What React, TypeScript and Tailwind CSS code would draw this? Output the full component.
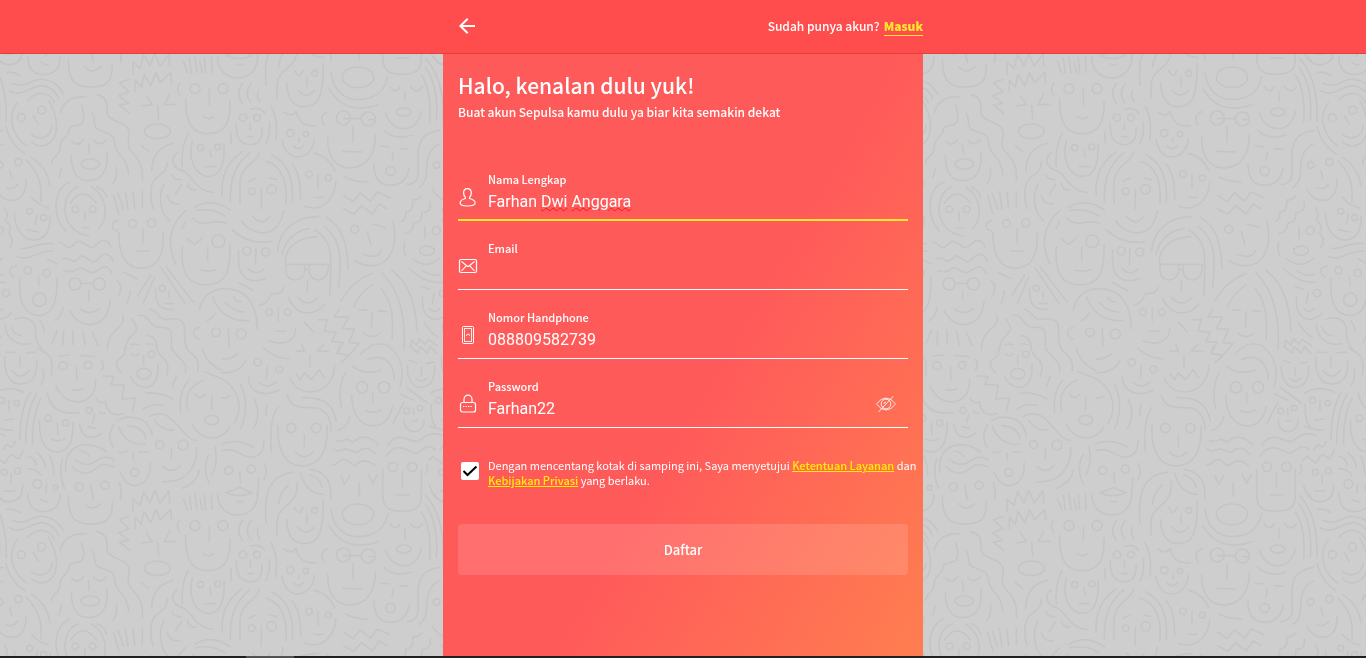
import { useState } from "react";
import type { ReactNode } from "react";

type Circle = [number, number, number];
type Ellipse = [number, number, number, number];

const UPPER =
  "M-63 50 Q-63 104 -13 104 Q33 100 33 52 M-25 66 Q-17 74 -4 74 M58 58 C58 120 75 141 127 141 C180 141 190 120 190 75 M108 80 Q128 106 156 80 M129 42 L132 66 M216 42 V66 " +
  "M252 103 V66 L273 85 L284 44 L303 78 L317 40 L333 78 L360 42 L362 77 M259 155 V120 L277 142 L285 103 L305 138 L320 98 L334 128 L365 98 L368 130 " +
  "M241 118 L211 128 L240 155 L209 167 L239 190 L211 195 L241 219 M279 198 L310 194 L292 167 M362 162 L346 194 L381 193 M326 196 L329 237 " +
  "M403 64 L416 99 M421 54 L427 99 M438 52 L444 98 M453 66 L460 98 M466 52 L470 98 M487 52 L489 98 M393 129 Q378 146 392 164 M481 148 V194 M463 230 Q480 242 494 230 M410 175 C408 250 430 281 478 281 C530 280 545 245 543 184 " +
  "M506 50 C506 95 535 114 566 114 C605 114 627 85 627 45 M563 72 Q572 78 581 72 M581 130 Q558 160 580 190 M606 132 Q584 160 605 187 M629 150 Q620 170 633 186 " +
  "M604 250 V270 M596 290 H613 M562 252 C560 300 580 314 604 314 C630 314 641 295 639 264 M606 208 Q632 198 647 220 M661 246 Q664 290 650 311 M666 198 Q690 240 680 299 M545 275 L547 310 " +
  "M737 92 Q750 120 762 92 M774 112 V139 M747 151 Q771 180 796 151 M713 128 C715 180 735 200 768 200 C810 198 822 170 823 70 " +
  "M931 20 V53 M846 100 C855 150 880 178 928 179 C975 178 1008 155 1016 110 M840 148 C865 185 890 203 928 204 Q965 203 986 194 " +
  "M1024 140 Q1040 165 1053 140 M1085 140 Q1103 165 1120 140 M1068 156 V184 M1009 220 C1020 250 1040 266 1066 266 C1095 265 1110 245 1117 214 M1005 271 C1030 295 1060 295 1090 285 " +
  "M1117 105 Q1148 150 1142 246 M1129 82 Q1170 140 1162 241 M1130 55 Q1187 120 1182 242 M1157 50 Q1165 74 1192 74 Q1220 72 1229 52 M1184 97 Q1205 94 1224 107 " +
  "M1200 130 C1244 150 1254 115 1291 118 C1324 122 1339 135 1354 162 M1192 152 C1234 175 1254 135 1294 137 Q1329 145 1340 177 M1248 181 C1274 150 1314 155 1327 188 M1264 228 L1279 253 M1258 283 C1284 305 1319 290 1320 257 M1216 188 C1184 230 1199 285 1244 318 M1310 181 C1344 240 1344 310 1289 318 Q1269 317 1260 306 M1182 260 Q1199 320 1240 341 " +
  "M33 219 C45 180 75 168 112 170 M144 164 C185 175 170 205 176 225 C190 250 240 245 241 280 C238 300 235 310 240 325 C255 350 285 360 280 422 M98 197 Q112 240 95 253 C75 258 65 255 60 270 C60 290 35 295 34 315 C35 350 10 345 7 372 M130 220 C142 240 130 255 145 268 C170 280 198 280 197 310 C200 350 235 345 239 403 M68 303 Q85 324 103 299 M134 299 Q150 324 172 299 M118 312 L121 340 M67 345 C67 400 85 422 121 422 C160 420 178 390 174 338 M202 382 Q206 415 192 430 M37 386 L30 412 " +
  "M277 317 L299 334 M308 393 C310 340 335 318 373 310 M418 281 Q395 320 400 381 M430 304 C415 360 440 409 480 409 C515 408 528 370 525 312 M483 330 L486 352 M469 380 H500 " +
  "M385 338 C368 350 365 375 390 388 C430 395 430 450 491 457 M354 366 C358 410 308 400 306 450 Q304 480 312 506 M345 432 C325 470 335 520 362 543 M369 404 Q372 420 395 419 M397 434 L380 462 M416 432 Q420 452 440 450 M355 467 Q362 495 391 491 " +
  "M107 517 L109 542 M103 563 H119 M65 489 Q100 435 143 489 M88 440 C30 460 30 575 120 588 M62 426 C10 450 10 530 49 573 M128 441 C175 470 180 530 150 565 M144 440 Q168 450 173 472 " +
  "M194 467 L210 522 M207 460 L224 508 M229 455 L237 508 M252 458 L257 505 M280 454 V502 M205 541 Q188 545 190 560 Q193 572 206 572 M282 566 V611 M264 633 H302 M210 579 C208 650 235 685 278 685 C325 682 345 650 343 577 " +
  "M30 606 C45 606 45 622 60 623 C75 622 75 603 90 604 C110 606 118 626 130 623 C145 620 145 601 165 601 Q182 604 185 621 M42 656 C60 648 65 665 75 664 C90 660 92 645 102 648 C120 655 125 668 135 666 C150 660 155 640 172 643 Q185 645 193 664 M44 692 C60 695 70 698 80 690 C95 680 100 683 110 690 C130 703 135 698 150 688 C170 675 180 680 189 700 " +
  "M97 730 H132 M119 752 V784 M94 807 Q120 828 151 807 M63 812 C80 845 100 854 124 854 C160 850 180 825 184 782 M204 722 Q225 740 207 769 M245 752 L235 791 M42 803 Q38 830 19 841 " +
  "M224 697 L265 717 M305 705 L266 768 M317 711 L283 789 M336 683 L408 790 M351 680 L433 786 M359 755 L361 774 M349 791 H373 M319 747 C320 790 330 812 374 808 " +
  "M410 512 C355 560 355 620 381 672 M437 502 Q490 470 544 510 M441 512 Q490 502 528 528 M432 534 C450 560 490 545 500 545 Q520 545 530 550 M410 545 L400 565 M415 597 L437 614 L461 592 M476 621 V663 M456 690 Q480 697 502 689 M400 620 C395 690 410 735 475 735 C530 730 545 700 543 612 " +
  "M578 336 C530 370 515 420 520 466 M603 338 C550 380 543 430 544 487 M631 338 C625 370 575 375 573 430 V490 M651 364 C700 375 715 430 711 490 M668 344 C720 370 735 420 730 486 M729 372 Q755 400 755 476 M600 424 L620 415 M662 414 L683 419 M637 448 V506 M611 529 Q637 562 664 529 M578 543 C610 590 690 600 703 512 M549 568 C580 600 620 612 668 605 " +
  "M705 216 Q730 235 741 214 C750 250 770 260 802 257 M750 292 V305 M733 318 Q748 335 764 317 M699 298 C705 335 725 351 746 351 C775 350 795 325 796 294 M796 340 Q840 350 858 393 M807 404 V445 M795 471 Q810 475 823 471 M861 425 C855 490 810 515 766 499 " +
  "M837 215 Q808 225 825 255 M884 236 H937 M960 239 H973 M912 260 V305 M881 334 L939 336 M836 292 C835 350 860 384 905 384 C955 382 980 340 979 284 M889 411 Q920 427 956 426 " +
  "M995 318 L1021 321 M1053 326 L1078 328 M1033 337 L1029 362 M975 372 C975 415 990 436 1025 436 C1060 435 1075 415 1081 384 M1075 434 C1120 430 1105 390 1107 340 C1110 290 1135 278 1172 271 M1110 443 C1140 420 1130 395 1135 360 Q1145 320 1172 312 " +
  "M1194 392 L1199 415 M1184 443 Q1200 452 1217 433 M1151 447 C1165 475 1185 483 1205 481 C1235 475 1243 450 1242 417 M1244 362 C1280 400 1290 430 1287 485 M1258 352 C1295 375 1310 410 1314 437 M1258 472 Q1280 498 1310 504 " +
  "M884 466 L912 485 L934 458 L964 484 L985 456 L1023 473 M884 506 L914 523 L938 497 L970 522 L991 492 L1014 506 M973 552 L1009 563 M955 575 L966 617 M943 643 Q985 660 997 632 M1032 545 C1055 640 1000 710 918 662 " +
  "M1057 545 Q1072 540 1070 516 Q1095 515 1091 480 Q1110 480 1117 468 M1143 486 Q1150 515 1119 518 Q1120 550 1094 549 Q1093 578 1068 581 M1127 560 L1129 595 M1177 504 Q1192 520 1180 542 Q1203 555 1190 580 Q1210 600 1193 624 M1067 606 Q1062 630 1070 648 M1091 656 Q1130 690 1171 655 M1081 684 Q1120 730 1180 727 M1121 692 Q1145 710 1174 703 " +
  "M1207 520 C1210 580 1240 600 1268 600 C1300 598 1316 570 1314 528 M1276 523 L1270 553 M1246 569 L1280 576 M1226 625 C1255 630 1275 605 1322 611 M1217 650 C1260 665 1270 630 1323 634 " +
  "M686 634 C690 570 740 530 809 529 M698 644 C710 600 740 570 782 566 M709 672 C705 620 750 592 803 590 M797 569 C850 600 850 640 842 766 M826 560 C880 600 877 660 869 740 M832 532 C880 560 895 610 897 687 M710 673 H839 M711 673 V695 Q715 720 739 720 Q765 718 767 690 V673 M781 673 V695 Q785 720 810 720 Q838 718 839 673 M768 689 H780 M775 721 V755 M746 772 Q775 805 807 772 M718 773 C735 810 755 819 775 819 C800 818 815 810 827 792 " +
  "M621 626 L619 674 M598 686 Q620 710 645 687 M569 630 C565 690 575 722 622 722 Q640 721 651 715 M570 728 L614 752 " +
  "M451 810 C460 760 500 744 535 746 C590 750 625 790 624 866 M491 771 C510 820 545 845 600 842 M528 786 Q550 815 586 816 M554 771 Q560 785 577 786 M498 820 Q490 835 474 842 M451 863 Q433 863 434 880 Q437 896 452 897 M538 866 L540 919 " +
  "M632 795 Q655 795 668 760 Q700 765 704 741 M688 803 V843 M679 873 Q695 875 709 873 M660 903 C710 920 740 900 740 864 M765 845 L792 875 " +
  "M876 784 C900 740 930 715 970 700 M914 800 Q930 760 970 734 M995 744 C1025 780 1035 820 1029 897 M998 697 C1060 760 1070 850 1065 930 M1028 690 C1080 730 1100 790 1104 872 M930 809 L953 811 M988 812 L1013 815 M969 815 L967 861 M945 880 Q967 900 992 880 " +
  "M807 840 L836 838 L825 873 L862 877 L848 905 L883 907 L864 940 M871 807 L855 830 L899 832 L880 865 L916 868 L900 907 L930 911 L900 946 L877 967 " +
  "M1117 740 L1140 747 M1156 758 L1150 791 M1141 806 Q1155 822 1173 806 M1121 770 C1115 820 1140 838 1160 838 Q1185 836 1198 818 M1126 847 Q1140 875 1167 891 M1084 920 L1089 900 L1103 916 L1111 896 L1128 913 L1137 898 L1165 916 " +
  "M1213 679 Q1192 678 1193 695 Q1198 710 1207 710 M1279 708 L1281 738 M1224 714 C1218 790 1240 826 1282 827 C1320 825 1338 790 1334 714 M1306 657 L1335 672 " +
  "M1180 852 C1180 890 1210 920 1255 911 M1197 861 Q1205 885 1228 886 M1210 837 C1240 825 1275 840 1270 880 Q1270 905 1290 930 M1284 843 Q1295 855 1296 875 " +
  "M25 871 L10 909 M44 871 L42 914 M71 870 L73 914 M101 873 L109 915 M130 876 L147 917 " +
  "M220 823 C235 870 175 860 175 930 M248 837 C290 890 230 870 230 930 M303 807 C330 815 330 840 350 838 C390 832 408 840 407 870 C405 900 408 920 418 930 M270 826 C300 820 300 860 325 861 C355 862 367 860 367 890 V930 M246 914 Q260 910 270 914 M292 912 Q302 910 313 914 M296 887 Q325 890 324 930";

const UPPER_CIRCLES: Circle[] = [
  [438, 146, 15], [522, 146, 15], [582, 233, 11], [624, 233, 10], [797, 100, 9], [1228, 233, 12], [1289, 210, 12],
  [455, 323, 9], [506, 321, 9], [79, 508, 10], [131, 508, 10], [250, 551, 12], [308, 549, 12], [78, 732, 18], [151, 732, 18],
  [340, 745, 9], [508, 604, 19], [608, 454, 10], [668, 448, 14], [724, 279, 11], [771, 282, 8], [780, 403, 10], [838, 414, 9],
  [883, 234, 21], [958, 237, 21], [1025, 393, 14], [1163, 375, 10], [1219, 366, 11], [917, 568, 12], [1162, 572, 12],
  [1253, 514, 9], [1295, 533, 9], [594, 633, 12], [650, 636, 12], [501, 877, 13], [577, 882, 15], [660, 817, 10], [716, 817, 10],
  [1182, 759, 11], [1247, 691, 11], [1304, 699, 11], [1282, 779, 20],
];

const UPPER_ELLIPSES: Ellipse[] = [
  [325, 274, 39, 22], [927, 112, 47, 31], [1064, 216, 22, 12], [124, 372, 28, 15], [1134, 632, 22, 14],
];

const LOWER_LEFT =
  "M14 25 C12 80 30 108 62 108 C100 107 112 80 110 40 M36 67 Q62 102 88 67 M60 28 V55 M18 12 L46 14 M78 15 L107 12 M113 0 C130 15 165 10 154 81 M129 65 Q135 95 120 111 " +
  "M174 24 L208 21 M241 22 L284 26 M229 55 L231 97 M216 125 Q233 129 249 123 M167 113 C185 150 210 162 235 162 C270 158 288 135 287 92 M304 35 Q316 50 304 68 M142 135 C150 185 185 200 236 194 " +
  "M373 0 C380 40 350 20 349 50 Q352 65 364 74 M395 16 Q405 32 418 16 M431 23 V51 M392 87 C405 115 425 118 440 118 C465 113 476 90 474 48 M470 0 C480 40 515 25 500 84 M516 0 C530 35 565 35 556 75 M558 0 C580 25 600 30 594 70 M529 85 L517 115 " +
  "M309 84 L342 86 L333 109 L373 112 L366 153 L406 150 L397 190 M289 152 Q300 170 316 161 Q325 210 369 197 M298 188 Q302 200 315 195 M284 199 L278 223 M264 236 L287 241 M239 230 Q245 270 280 268 Q295 265 305 255 " +
  "M-18 135 Q25 110 70 133 M27 157 V189 M12 216 L41 213 M-20 235 Q10 248 38 247 M92 132 Q60 180 60 277 M109 138 Q78 190 77 286 M123 150 Q95 205 98 288 " +
  "M172 225 L174 260 M155 274 Q175 283 195 272 M119 218 C115 290 145 312 172 312 C210 310 220 270 219 224 " +
  "M341 230 Q318 265 340 299 M352 219 C380 200 445 200 457 262 M355 236 C370 275 405 295 437 288 M383 233 Q430 235 438 272 M356 312 Q370 317 382 310 M416 311 Q430 315 445 310 M399 315 L401 340 M360 373 C375 405 390 413 405 413 C440 410 452 380 451 345 M429 184 Q455 165 489 172 M438 136 Q480 130 518 153 " +
  "M447 206 C520 165 545 280 590 277 M463 216 Q485 250 522 246 M514 299 V331 M489 355 Q515 380 541 353 M591 298 C590 370 550 405 487 401 M599 366 Q590 405 548 421 " +
  "M566 98 Q535 130 542 195 M609 96 C560 120 555 150 563 188 M586 138 Q600 160 617 138 M635 145 V185 M577 230 C590 255 610 270 640 270 Q670 268 690 237 M607 0 Q620 50 666 67 M613 71 L666 92 M627 320 Q605 360 628 407 M645 297 Q655 350 635 380 " +
  "M9 305 L21 289 L35 298 L46 281 M-24 337 L-12 325 L14 346 L33 319 L56 332 L71 306 M34 377 L33 406 M12 428 Q30 432 44 427 M-22 412 Q-10 462 30 462 Q68 455 68 410 " +
  "M84 325 Q105 330 109 352 M112 315 Q135 335 137 362 M149 324 Q162 350 161 380 M83 362 Q110 362 123 382 M140 408 L137 436 " +
  "M198 373 C190 320 220 290 260 290 Q300 293 320 313 M226 334 C270 370 290 330 310 328 Q330 325 343 337 M216 356 C260 400 290 355 305 350 Q325 348 343 357 M239 309 Q255 308 270 326 M188 331 Q175 380 194 422 M272 412 L280 454 M358 404 Q366 425 361 453";

const LOWER_LEFT_CIRCLES: Circle[] = [
  [189, 53, 12], [264, 51, 11], [455, 19, 10], [267, 187, 9], [5, 157, 9], [50, 166, 8], [145, 211, 10], [197, 225, 9],
  [404, 373, 12], [479, 290, 12], [549, 291, 15], [13, 373, 9], [52, 369, 9], [112, 408, 13], [167, 419, 7], [238, 417, 12], [315, 412, 12],
];

const LOWER_RIGHT =
  "M0 92 C60 130 60 190 36 225 M0 150 Q20 150 24 142 M0 33 Q25 35 45 18 M0 75 Q55 75 73 35 M136 55 L133 91 M112 104 Q135 125 162 102 M79 87 C80 130 120 150 172 126 M124 0 Q160 32 200 32 " +
  "M222 8 L247 10 L240 -10 M305 -10 L286 8 L320 10 M264 22 V55 M222 77 L236 95 L246 74 L268 95 L292 65 L308 90 M203 90 C220 125 245 132 268 132 C310 130 338 95 338 52 M358 43 L381 22 L345 16 L353 -6 " +
  "M417 20 Q425 5 440 0 C450 -15 490 -15 500 -5 C545 30 545 80 534 118 M437 35 C480 15 515 40 517 95 M391 54 Q430 85 477 66 M452 135 V163 M433 188 Q455 198 478 186 M389 141 C390 205 420 234 455 234 C490 232 505 205 511 176 M370 74 Q345 120 359 181 M383 206 Q375 240 348 247 " +
  "M556 54 C555 100 575 118 600 118 C630 115 640 85 638 54 M562 37 L584 45 M612 47 L635 42 M598 59 V83 M581 91 Q598 107 614 91 M564 -5 L588 15 L594 -4 L616 15 L625 -5 L645 18 M535 138 L576 157 M555 120 L616 165 M545 164 L513 226 M574 182 L576 200 M571 219 L586 217 M546 217 C550 245 565 252 580 251 Q605 248 606 217 M628 168 Q625 225 645 240 " +
  "M56 110 Q85 170 57 241 M96 153 Q120 200 94 242 M136 168 Q130 185 133 201 M168 177 Q140 215 148 310 M195 140 C210 190 250 175 285 180 Q325 190 328 248 M242 149 C310 145 335 175 343 221 M247 260 V295 M221 312 Q245 340 273 312 M168 233 C165 310 190 354 242 354 C300 350 318 300 315 233 " +
  "M0 287 Q50 270 95 298 M0 308 C40 295 50 325 90 327 Q125 325 126 277 M53 373 L56 405 M12 434 Q35 428 53 418 Q70 428 89 434 Q50 452 12 434 M127 346 Q138 370 127 393 M110 390 C110 420 108 430 105 440 " +
  "M214 373 C140 380 125 440 132 523 M226 401 C230 470 180 470 168 505 Q163 530 165 560 M169 468 Q175 430 199 411 M236 375 Q250 435 305 440 M264 381 Q295 390 300 418 M265 365 C310 370 330 400 326 452 " +
  "M340 276 C360 290 365 270 380 275 C395 290 400 275 415 268 Q440 262 470 290 M334 302 C350 320 360 300 375 303 C400 315 405 315 420 303 Q440 295 460 318 M332 350 C350 355 345 335 365 334 C385 335 385 355 400 353 Q425 325 458 353 M357 384 L368 409 L383 383 M439 378 L452 407 L466 380 M412 407 V443 " +
  "M497 292 C530 240 570 290 590 280 Q630 245 660 263 M492 324 C530 270 565 320 585 315 C610 300 620 285 640 306 M541 377 V418 M523 441 H561 M482 365 V440 C483 480 500 490 545 490 C590 488 598 470 598 440 V365 M612 349 Q622 362 612 376";

const LOWER_RIGHT_CIRCLES: Circle[] = [
  [107, 43, 11], [172, 64, 10], [420, 118, 17], [486, 118, 17], [554, 189, 9], [594, 180, 8], [208, 240, 14], [283, 240, 14],
  [20, 367, 12], [88, 363, 12], [513, 357, 14], [571, 357, 14],
];

const TILE_OFFSETS = [-1311, 0, 1311].flatMap((x) => [-1311, 0, 1311].map((y) => ({ x, y })));

function Doodles({ d, circles, ellipses = [], x, y }: { d: string; circles: Circle[]; ellipses?: Ellipse[]; x: number; y: number }) {
  return (
    <g transform={`translate(${x} ${y})`}>
      <path d={d} />
      {circles.map(([cx, cy, r]) => (
        <circle key={`${cx}-${cy}`} cx={cx} cy={cy} r={r} />
      ))}
      {ellipses.map(([cx, cy, rx, ry]) => (
        <ellipse key={`${cx}-${cy}`} cx={cx} cy={cy} rx={rx} ry={ry} />
      ))}
    </g>
  );
}

function FacesBackground() {
  return (
    <svg className="fixed inset-0 -z-10 h-full w-full bg-[#cecece]" aria-hidden="true">
      <defs>
        <g id="faces" fill="none" stroke="#c5c5c5" strokeWidth="5" strokeLinecap="round" strokeLinejoin="round">
          <Doodles d={UPPER} circles={UPPER_CIRCLES} ellipses={UPPER_ELLIPSES} x={147} y={120} />
          <Doodles d={LOWER_LEFT} circles={LOWER_LEFT_CIRCLES} ellipses={[[432, 77, 21, 16], [635, 216, 21, 14]]} x={0} y={1044} />
          <Doodles d={LOWER_RIGHT} circles={LOWER_RIGHT_CIRCLES} x={666} y={1044} />
        </g>
        <pattern id="faces-tile" width="437" height="437" patternUnits="userSpaceOnUse" viewBox="0 0 1311 1311">
          {TILE_OFFSETS.map(({ x, y }) => (
            <use key={`${x}/${y}`} href="#faces" x={x} y={y} />
          ))}
        </pattern>
      </defs>
      <rect width="100%" height="100%" fill="url(#faces-tile)" />
    </svg>
  );
}

function UserIcon() {
  return (
    <svg viewBox="0 0 20 20" className="size-5" fill="none" stroke="currentColor" strokeWidth="1.2" aria-hidden="true">
      <path d="M9.500 1.600c-2.400 0-3.900 1.800-3.900 4.200 0 1.900.7 3.600 1.800 4.600v1.100c-3.400.9-5.300 1.900-5.300 4.500 0 1.900 2.700 3 7.400 3s7.700-1.100 7.700-3c0-2.600-2.300-3.600-5.700-4.500v-1.100c1.100-1 1.800-2.700 1.800-4.600 0-2.400-1.500-4.200-3.800-4.200Z" />
    </svg>
  );
}

function MailIcon() {
  return (
    <svg viewBox="0 0 20 20" className="size-5" fill="none" stroke="currentColor" aria-hidden="true">
      <rect x="1.500" y="3.500" width="17" height="13" rx="1.500" strokeWidth="1.200" />
      <path d="M3.500 5.500 9 10q1 .8 2 0l5.500-4.500M3.500 14.800l4.700-5M16.500 14.800l-4.700-5" strokeWidth="1.100" />
    </svg>
  );
}

function PhoneIcon() {
  return (
    <svg viewBox="0 0 20 20" className="size-5" fill="none" stroke="currentColor" strokeWidth="1" aria-hidden="true">
      <rect x="4.500" y="1.500" width="11" height="17" rx="1" />
      <rect x="6.500" y="3.500" width="7" height="13" strokeOpacity=".85" />
      <path d="m8 10.800 1.200-1 .8-1 .8 1 1.200.5" />
    </svg>
  );
}

function LockIcon() {
  return (
    <svg viewBox="0 0 20 20" className="size-5" fill="none" stroke="currentColor" strokeWidth="1.200" aria-hidden="true">
      <rect x="2.500" y="8.500" width="15" height="9.500" rx="2" />
      <path d="M6 8.500V5.200a4 4 0 0 1 8 0v3.300" />
      <path d="M5 12.500h10" strokeDasharray="1.300 1.200" />
    </svg>
  );
}

function HiddenIcon() {
  return (
    <svg viewBox="0 0 22 18" className="h-[18px] w-[22px]" fill="none" stroke="currentColor" strokeWidth="1" strokeOpacity=".85" aria-hidden="true">
      <path d="M1.500 9Q6 3 11 3t9.500 6Q16 15 11 15T1.500 9Z" />
      <circle cx="11" cy="9" r="4.800" />
      <path d="M9 9a2 2 0 0 1 2-2M3.500 17 18.500 1" />
    </svg>
  );
}

type FieldProps = {
  id: string;
  label: string;
  type: string;
  value: string;
  onChange: (value: string) => void;
  icon: ReactNode;
  active?: boolean;
  overlay?: ReactNode;
  action?: ReactNode;
};

function Field({ id, label, type, value, onChange, icon, active = false, overlay, action }: FieldProps) {
  return (
    <div className={`flex gap-2.5 pt-[19px] ${active ? "border-b-2 border-[#ffe92e] pb-[5px]" : "border-b border-white pb-1.5"}`}>
      <span className="pt-4">{icon}</span>
      <div className="relative min-w-0 flex-1">
        <label htmlFor={id} className="mb-px block text-[11px] leading-4 font-medium">
          {label}
        </label>
        <input
          id={id}
          type={type}
          value={value}
          spellCheck={false}
          onChange={(e) => onChange(e.target.value)}
          className="block h-[26px] w-full bg-transparent font-['Roboto',sans-serif] text-base text-white outline-none"
        />
        {overlay}
      </div>
      {action}
    </div>
  );
}

export default function App() {
  const [name, setName] = useState("Farhan Dwi Anggara");
  const [email, setEmail] = useState("");
  const [phone, setPhone] = useState("088809582739");
  const [password, setPassword] = useState("Farhan22");
  const [visible, setVisible] = useState(true);
  const [agreed, setAgreed] = useState(true);

  return (
    <div className="flex min-h-screen flex-col font-['Noto_Sans_CJK_JP',sans-serif] text-white">
      <FacesBackground />
      <header className="border-b border-[#e23f3f] bg-[#ff4d4d]">
        <div className="mx-auto flex h-[53px] w-full max-w-[480px] items-center justify-between pl-3">
          <button type="button" aria-label="Kembali" className="pb-0.5">
            <svg viewBox="0 0 24 24" className="size-6" fill="currentColor" aria-hidden="true">
              <path d="M20 11H7.830l5.590-5.590L12 4l-8 8 8 8 1.410-1.410L7.830 13H20v-2z" />
            </svg>
          </button>
          <p className="flex gap-1 text-xs leading-[18px] font-medium">
            Sudah punya akun?
            <a href="#masuk" className="border-b border-[#ffe92e] font-black text-[#ffe92e]">
              Masuk
            </a>
          </p>
        </div>
      </header>

      <main className="mx-auto w-full max-w-[480px] flex-1 bg-linear-[120deg] from-[#ff5a5a] from-55% to-[#ff7e50] px-[15px] pt-[15px]">
        <h1 className="mb-px text-[21px] leading-8 font-medium">Halo, kenalan dulu yuk!</h1>
        <p className="text-xs leading-5 font-medium">Buat akun Sepulsa kamu dulu ya biar kita semakin dekat</p>

        <form className="mt-[30px]" onSubmit={(e) => e.preventDefault()}>
          <Field
            id="name"
            label="Nama Lengkap"
            type="text"
            value={name}
            onChange={setName}
            icon={<UserIcon />}
            active
            overlay={
              name === "Farhan Dwi Anggara" && (
                <span aria-hidden="true" className="pointer-events-none absolute bottom-0 left-0 font-['Roboto',sans-serif] text-base leading-[26px] whitespace-pre text-transparent">
                  Farhan <span className="underline decoration-[#ff1020] decoration-wavy decoration-1">Dwi</span>{" "}
                  <span className="underline decoration-[#ff1020] decoration-wavy decoration-1">Anggara</span>
                </span>
              )
            }
          />
          <Field id="email" label="Email" type="email" value={email} onChange={setEmail} icon={<MailIcon />} />
          <Field id="phone" label="Nomor Handphone" type="tel" value={phone} onChange={setPhone} icon={<PhoneIcon />} />
          <Field
            id="password"
            label="Password"
            type={visible ? "text" : "password"}
            value={password}
            onChange={setPassword}
            icon={<LockIcon />}
            action={
              <button type="button" aria-label="Sembunyikan password" onClick={() => setVisible(!visible)} className="mr-[11px] pt-2">
                <HiddenIcon />
              </button>
            }
          />

          <div className="-mr-3 mt-[30px] flex gap-[9px] pl-[3px]">
            <span className="relative mt-1 size-[18px] shrink-0">
              <input
                id="terms"
                type="checkbox"
                checked={agreed}
                onChange={(e) => setAgreed(e.target.checked)}
                className="block size-[18px] appearance-none rounded-[2px] bg-white"
              />
              {agreed && (
                <svg viewBox="0 0 18 18" className="pointer-events-none absolute inset-0 size-[18px]" fill="none" stroke="black" strokeWidth="2" aria-hidden="true">
                  <path d="m2.500 9 4 4L15.500 4.500" />
                </svg>
              )}
            </span>
            <label htmlFor="terms" className="text-[11px] leading-[15px]">
              Dengan mencentang kotak di samping ini, Saya menyetujui{" "}
              <a href="#ketentuan" className="font-medium text-[#ffee00] underline">
                Ketentuan Layanan
              </a>{" "}
              dan{" "}
              <a href="#privasi" className="font-medium text-[#ffee00] underline">
                Kebijakan Privasi
              </a>{" "}
              yang berlaku.
            </label>
          </div>

          <button type="submit" className="mt-9 h-[51px] w-full rounded bg-white/13 text-[13px] font-medium">
            Daftar
          </button>
        </form>
      </main>

      <footer className="flex h-0.5 bg-[#231f20]">
        <div className="ml-[18%] w-12 bg-[#555152]" />
      </footer>
    </div>
  );
}
